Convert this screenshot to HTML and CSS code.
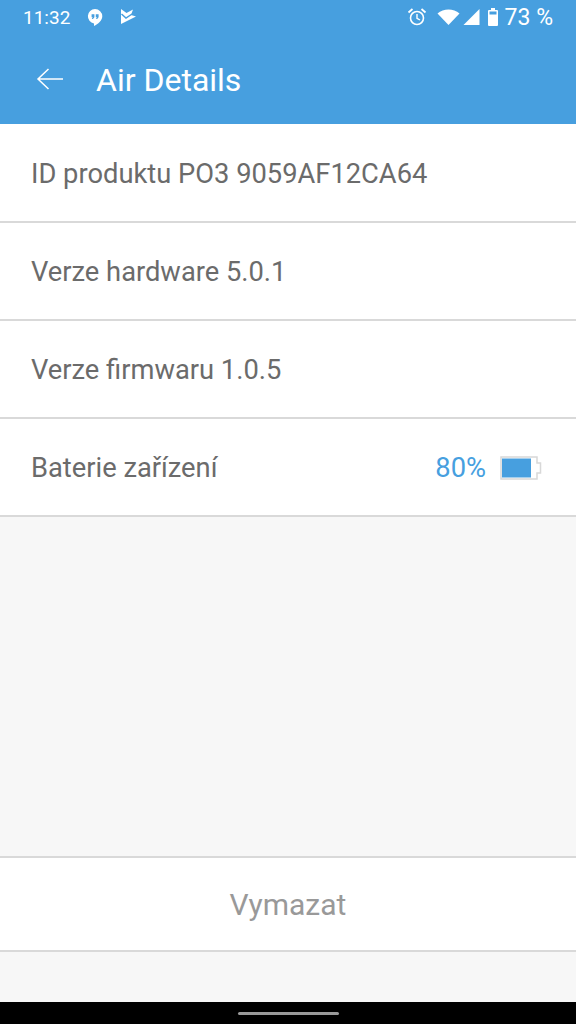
FILE: index.html
```html
<!DOCTYPE html>
<html lang="cs">
<head>
  <meta charset="UTF-8">
  <meta name="viewport" content="width=device-width, initial-scale=1.0">
  <title>Air Details</title>
  <link rel="stylesheet" href="styles.css">
</head>
<body>
  <div class="screen">
    <header class="header">
      <div class="status-bar">
        <div class="status-left">
          <span class="time">11:32</span>
          <svg class="notif-icon" width="16" height="18" viewBox="0 0 16 18">
            <path d="M8 1a7.300 7.300 0 0 0-1 14.500V18c4-1.800 8.300-5.500 8.300-9.700A7.300 7.300 0 0 0 8 1z" fill="#fff"/>
            <path d="M4.600 6.300h2.800v2.900L6 11H4.800l.9-1.800H4.600zM8.800 6.300h2.800v2.900L10.200 11H9l.9-1.800H8.800z" fill="#479fdf"/>
          </svg>
          <svg class="notif-icon" width="16" height="16" viewBox="0 0 16 16">
            <path d="M1 0l5.500 4L13 .5 11 6l5 1.500L1 15z" fill="#fff"/>
            <path d="M1.500 5l4.500 4 6-4" fill="none" stroke="#479fdf" stroke-width="1.500"/>
          </svg>
        </div>
        <div class="status-right">
          <svg class="alarm" width="20" height="20" viewBox="0 0 20 20">
            <circle cx="10" cy="11" r="6.500" fill="none" stroke="#fff" stroke-width="1.600"/>
            <path d="M10 7v4.300l3 1.700" fill="none" stroke="#fff" stroke-width="1.400"/>
            <path d="M1.500 5.500l4-3.500M18.500 5.500l-4-3.500" fill="none" stroke="#fff" stroke-width="1.800"/>
          </svg>
          <svg class="wifi" width="23" height="16" viewBox="0 0 22 16">
            <path d="M0 4.500C6-1 16-1 22 4.500L11 16z" fill="#fff"/>
          </svg>
          <svg class="signal" width="19" height="18" viewBox="0 0 18 18">
            <path d="M17 1v16H1z" fill="#fff"/>
          </svg>
          <svg class="bat-small" width="10" height="18" viewBox="0 0 10 18">
            <path d="M3 0h4v2h2a1 1 0 0 1 1 1v14a1 1 0 0 1-1 1H1a1 1 0 0 1-1-1V3a1 1 0 0 1 1-1h2z" fill="#fff"/>
            <rect x="1.500" y="3.500" width="7" height="3" fill="#479fdf"/>
          </svg>
          <span class="level">73 %</span>
        </div>
      </div>
      <div class="toolbar">
        <svg class="back" width="28" height="24" viewBox="0 0 28 24">
          <path d="M27 12H2M12.500 2L2 12l10.500 10" fill="none" stroke="#fff" stroke-width="1.500"/>
        </svg>
        <h1 class="title">Air Details</h1>
      </div>
    </header>

    <main class="content">
      <div class="list">
        <div class="row">ID produktu PO3 9059AF12CA64</div>
        <div class="row">Verze hardware 5.0.1</div>
        <div class="row">Verze firmwaru 1.0.5</div>
        <div class="row">
          <span>Baterie zařízení</span>
          <span class="battery">
            <span class="percent">80%</span>
            <svg width="44" height="26" viewBox="0 0 44 26">
              <path d="M2 2h36v6h3.500v10H38v6H2z" fill="#fff" stroke="#d8d8d8" stroke-width="1.500"/>
              <rect x="3" y="3.500" width="29" height="19" fill="#479fdf"/>
            </svg>
          </span>
        </div>
      </div>
      <button class="clear-btn">Vymazat</button>
    </main>

    <div class="nav-bar"><span class="nav-pill"></span></div>
  </div>
</body>
</html>
```

FILE: styles.css
```css
body {
  margin: 0;
  font-family: Roboto, sans-serif;
  background: #f7f7f7;
}

.screen {
  display: flex;
  flex-direction: column;
  height: 1024px;
  overflow: hidden;
}

.header {
  height: 124px;
  background: #479fdf;
  color: #fff;
  flex-shrink: 0;
}

.status-bar {
  display: flex;
  justify-content: space-between;
  align-items: center;
  height: 33px;
  padding: 0 23px;
}

.status-left, .status-right {
  display: flex;
  align-items: center;
}

.status-left {
  gap: 17px;
}

.status-right {
  gap: 2px;
}

.time {
  font-size: 19px;
  margin-top: 1px;
}

.alarm {
  margin-right: 8px;
}

.bat-small {
  margin: 0 5px;
}

.level {
  font-size: 23px;
  margin-top: 2px;
}

.toolbar {
  display: flex;
  align-items: center;
  height: 92px;
  padding-left: 36px;
  gap: 32px;
}

.title {
  margin: 2px 0 0;
  font-size: 32px;
  font-weight: 400;
}

.content {
  flex-grow: 1;
  display: flex;
  flex-direction: column;
  justify-content: space-between;
  padding-bottom: 50px;
}

.list {
  background: #fff;
  padding-top: 1px;
}

.row {
  display: flex;
  justify-content: space-between;
  align-items: center;
  height: 95px;
  padding: 1px 33px 0 31px;
  border-bottom: 2px solid #d9d9d9;
  color: #6b6b6b;
  font-size: 27.3px;
}

.battery {
  display: flex;
  align-items: center;
  gap: 13px;
}

.percent {
  color: #479fdf;
}

.clear-btn {
  height: 96px;
  background: #fff;
  border: none;
  border-top: 2px solid #d9d9d9;
  border-bottom: 2px solid #d9d9d9;
  color: #999;
  font-family: Roboto, sans-serif;
  font-size: 30px;
}

.nav-bar {
  display: flex;
  justify-content: center;
  align-items: center;
  height: 22px;
  background: #000;
  flex-shrink: 0;
}

.nav-pill {
  width: 101px;
  height: 3px;
  background: #999;
  border-radius: 2px;
}
```
